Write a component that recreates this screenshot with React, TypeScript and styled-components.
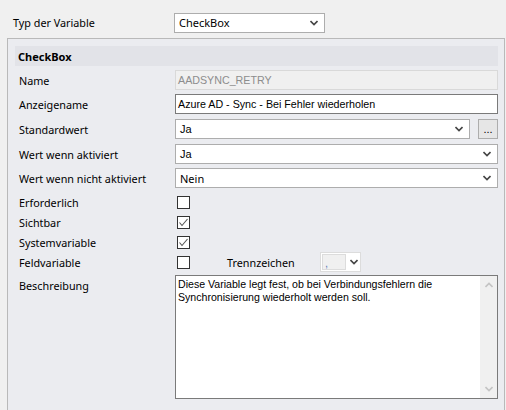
import React from 'react';
import styled, { createGlobalStyle } from 'styled-components';

const GlobalStyle = createGlobalStyle`
  html, body {
    margin: 0;
    padding: 0;
    background: #f0f0f0;
  }
  body {
    width: 506px;
    height: 410px;
    overflow: hidden;
    font-family: "Noto Sans", "DejaVu Sans", sans-serif;
    font-size: 11px;
    color: #000;
  }
`;

const Page = styled.div`
  padding-top: 12px;
`;

const TopRow = styled.div`
  display: flex;
  align-items: center;
  height: 21px;
  padding-left: 13px;
`;

const Label = styled.div<{ $width: number }>`
  width: ${(p) => p.$width}px;
  flex-shrink: 0;
  font-size: 10.8px;
  white-space: nowrap;
`;

const Panel = styled.div`
  margin: 5px 1px 0 7px;
  height: 366px;
  border: 1px solid #b9b9b9;
  background: #ebecf0;
  padding: 7px 6px 0 7px;
`;

const Header = styled.div`
  height: 20px;
  display: flex;
  align-items: center;
  padding-left: 3px;
  background: #e2e3e8;
  font-weight: bold;
  font-size: 11px;
`;

const Row = styled.div<{ $top: number; $h?: number }>`
  display: flex;
  align-items: center;
  margin-top: ${(p) => p.$top}px;
  height: ${(p) => p.$h ?? 20}px;
  padding-left: 4px;
`;

const TopAlignedRow = styled(Row)`
  align-items: flex-start;
`;

const TextBox = styled.div<{ $disabled?: boolean }>`
  flex: 1;
  height: 20px;
  box-sizing: border-box;
  border: 1px solid ${(p) => (p.$disabled ? '#d9d9d9' : '#7a7a7a')};
  background: ${(p) => (p.$disabled ? '#f0f0f0' : '#fff')};
  color: ${(p) => (p.$disabled ? '#8d8d8d' : '#000')};
  font-family: "Liberation Sans", Arial, sans-serif;
  font-size: 10.7px;
  display: flex;
  align-items: center;
  padding-left: 2px;
`;

const Combo = styled.div<{ $width?: number }>`
  ${(p) => (p.$width ? `width: ${p.$width}px;` : 'flex: 1;')}
  height: 20px;
  box-sizing: border-box;
  border: 1px solid #adadad;
  background: #fff;
  display: flex;
  align-items: center;
  justify-content: space-between;
  padding: 0 6px 0 4px;
  font-family: "Liberation Sans", Arial, sans-serif;
  font-size: 11px;
`;

const ComboLabel = styled.div<{ $ui?: boolean }>`
  font-family: ${(p) => (p.$ui ? '"Noto Sans", sans-serif' : '"Liberation Sans", Arial, sans-serif')};
  font-size: ${(p) => (p.$ui ? '11px' : '11px')};
`;

const SmallCombo = styled.div`
  width: 41px;
  height: 20px;
  box-sizing: border-box;
  border: 1px solid #dcdcdc;
  background: #fff;
  display: flex;
  align-items: stretch;
`;

const SmallComboText = styled.div`
  width: 20px;
  margin: 1px;
  border: 1px solid #dcdcdc;
  background: #f0f0f0;
  color: #5b7fb8;
  font-family: "Liberation Sans", Arial, sans-serif;
  font-size: 11px;
  line-height: 12px;
  display: flex;
  align-items: flex-end;
  padding-left: 2px;
`;

const SmallComboArrow = styled.div`
  flex: 1;
  display: flex;
  align-items: center;
  justify-content: center;
`;

const DotsButton = styled.div`
  width: 20px;
  height: 20px;
  box-sizing: border-box;
  margin-left: 8px;
  border: 1px solid #adadad;
  background: #e6e6e6;
  display: flex;
  align-items: flex-end;
  justify-content: center;
  font-family: "Liberation Sans", Arial, sans-serif;
  font-size: 11px;
  line-height: 14px;
  padding-bottom: 2px;
`;

const CheckBox = styled.div`
  width: 13px;
  height: 13px;
  box-sizing: border-box;
  margin-left: 2px;
  border: 1px solid #333;
  background: #fff;
  display: flex;
  align-items: center;
  justify-content: center;
`;

const Spacer = styled.div<{ $w: number }>`
  width: ${(p) => p.$w}px;
  flex-shrink: 0;
`;

const TextArea = styled.div`
  flex: 1;
  height: 124px;
  box-sizing: border-box;
  border: 1px solid #7a7a7a;
  background: #fff;
  display: flex;
`;

const TextAreaBody = styled.div`
  flex: 1;
  padding: 2px 2px;
  font-family: "Liberation Sans", Arial, sans-serif;
  font-size: 10.6px;
  line-height: 13px;
`;

const ScrollBar = styled.div`
  width: 17px;
  background: #f0f0f0;
  display: flex;
  flex-direction: column;
  justify-content: space-between;
  align-items: center;
  padding: 6px 0 6px;
`;

const Chevron = ({ color = '#444', up = false }: { color?: string; up?: boolean }) => (
  <svg width="8" height="6" viewBox="0 0 8 6" style={up ? { transform: 'rotate(180deg)' } : undefined}>
    <path d="M0.5 1 L4 4.5 L7.5 1" fill="none" stroke={color} strokeWidth="1.6" />
  </svg>
);

const Tick = () => (
  <svg width="11" height="11" viewBox="0 0 11 11">
    <path d="M1.5 5.5 L4 8.5 L9.5 2" fill="none" stroke="#555" strokeWidth="1.1" />
  </svg>
);

const LABEL_W = 156;

export default function App() {
  return (
    <Page>
      <GlobalStyle />
      <TopRow>
        <Label $width={161}>Typ der Variable</Label>
        <Combo $width={151}>
          <ComboLabel $ui>CheckBox</ComboLabel>
          <Chevron />
        </Combo>
      </TopRow>
      <Panel>
        <Header>CheckBox</Header>
        <Row $top={4}>
          <Label $width={LABEL_W}>Name</Label>
          <TextBox $disabled>AADSYNC_RETRY</TextBox>
        </Row>
        <Row $top={4}>
          <Label $width={LABEL_W}>Anzeigename</Label>
          <TextBox>Azure AD - Sync - Bei Fehler wiederholen</TextBox>
        </Row>
        <Row $top={5}>
          <Label $width={LABEL_W}>Standardwert</Label>
          <Combo>
            <ComboLabel>Ja</ComboLabel>
            <Chevron />
          </Combo>
          <DotsButton>...</DotsButton>
        </Row>
        <Row $top={5}>
          <Label $width={LABEL_W}>Wert wenn aktiviert</Label>
          <Combo>
            <ComboLabel>Ja</ComboLabel>
            <Chevron />
          </Combo>
        </Row>
        <Row $top={4}>
          <Label $width={LABEL_W}>Wert wenn nicht aktiviert</Label>
          <Combo>
            <ComboLabel $ui>Nein</ComboLabel>
            <Chevron />
          </Combo>
        </Row>
        <Row $top={4}>
          <Label $width={LABEL_W}>Erforderlich</Label>
          <CheckBox />
        </Row>
        <Row $top={0}>
          <Label $width={LABEL_W}>Sichtbar</Label>
          <CheckBox>
            <Tick />
          </CheckBox>
        </Row>
        <Row $top={0}>
          <Label $width={LABEL_W}>Systemvariable</Label>
          <CheckBox>
            <Tick />
          </CheckBox>
        </Row>
        <Row $top={0}>
          <Label $width={LABEL_W}>Feldvariable</Label>
          <CheckBox />
          <Spacer $w={37} />
          <Label $width={93}>Trennzeichen</Label>
          <SmallCombo>
            <SmallComboText>,</SmallComboText>
            <SmallComboArrow>
              <Chevron />
            </SmallComboArrow>
          </SmallCombo>
        </Row>
        <TopAlignedRow $top={3} $h={124}>
          <Label $width={LABEL_W} style={{ paddingTop: 3 }}>
            Beschreibung
          </Label>
          <TextArea>
            <TextAreaBody>
              Diese Variable legt fest, ob bei Verbindungsfehlern die Synchronisierung wiederholt werden soll.
            </TextAreaBody>
            <ScrollBar>
              <Chevron color="#c4c4c4" up />
              <Chevron color="#c4c4c4" />
            </ScrollBar>
          </TextArea>
        </TopAlignedRow>
      </Panel>
    </Page>
  );
}
